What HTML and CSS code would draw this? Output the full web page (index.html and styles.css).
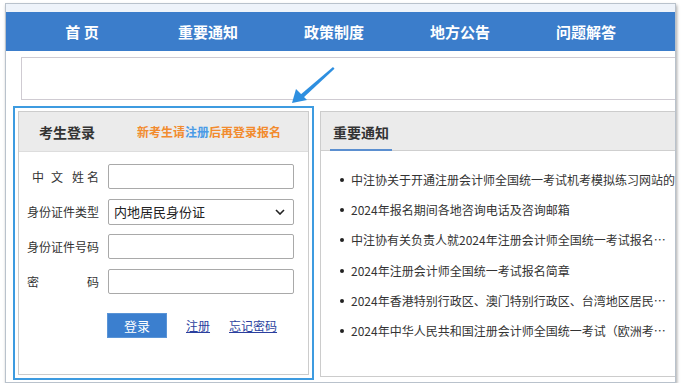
FILE: index.html
```html
<!DOCTYPE html>
<html lang="zh-CN">
<head>
<meta charset="utf-8">
<link rel="stylesheet" href="styles.css">
</head>
<body>
<div class="frame">
  <div class="strip"></div>
  <nav class="nav">
    <a class="nav-item">首 页</a>
    <a class="nav-item">重要通知</a>
    <a class="nav-item">政策制度</a>
    <a class="nav-item">地方公告</a>
    <a class="nav-item">问题解答</a>
  </nav>
  <div class="banner"></div>
  <div class="main">
    <div class="login">
      <div class="panel">
        <div class="panel-head">
          <span class="panel-title">考生登录</span>
          <span class="tip">新考生请<span class="tip-link">注册</span>后再登录报名</span>
        </div>
        <div class="form">
          <div class="row">
            <label class="lbl"><span class="g7">中</span><span class="g9">文</span><span class="g3">姓</span>名</label>
            <input class="field" type="text">
          </div>
          <div class="row">
            <label class="lbl">身份证件类型</label>
            <div class="field select">
              <span>内地居民身份证</span>
              <svg class="chev" width="10" height="6" viewBox="0 0 10 6"><path d="M1 1 L5 5 L9 1" fill="none" stroke="#222" stroke-width="1.6"/></svg>
            </div>
          </div>
          <div class="row">
            <label class="lbl">身份证件号码</label>
            <input class="field" type="text">
          </div>
          <div class="row">
            <label class="lbl lbl-just">密码</label>
            <input class="field" type="password">
          </div>
          <div class="actions">
            <button class="btn">登录</button>
            <a class="link">注册</a>
            <a class="link">忘记密码</a>
          </div>
        </div>
      </div>
    </div>
    <div class="notice">
      <div class="notice-head"><span class="notice-title">重要通知</span></div>
      <ul class="list">
        <li class="item item-full">中注协关于开通注册会计师全国统一考试机考模拟练习网站的公告</li>
        <li class="item">2024年报名期间各地咨询电话及咨询邮箱</li>
        <li class="item">中注协有关负责人就2024年注册会计师全国统一考试报名相关问题答记者问</li>
        <li class="item">2024年注册会计师全国统一考试报名简章</li>
        <li class="item">2024年香港特别行政区、澳门特别行政区、台湾地区居民及外国籍公民报名简章</li>
        <li class="item">2024年中华人民共和国注册会计师全国统一考试（欧洲考区）报名简章</li>
      </ul>
    </div>
  </div>
  <svg class="arrow" width="60" height="50" viewBox="0 0 60 50">
    <path d="M49 5 L50.5 6.8 L18.5 36.5 L15.5 33.5 Z" fill="#2e8fe0"/>
    <path d="M8 41 L12 27 L23 38 Z" fill="#2e8fe0"/>
  </svg>
</div>
</body>
</html>
```

FILE: styles.css
```css
* { box-sizing: border-box; }
html, body { margin: 0; padding: 0; background: #ffffff; }
body {
  font-family: "Noto Sans CJK SC", "Noto Sans", sans-serif;
  color: #333;
}
.frame {
  position: relative;
  margin: 3px 0 0 5px;
  width: 671px;
  height: 380px;
  border: 1px solid #b9c2cc;
  box-shadow: 1px 2px 3px rgba(0,0,0,0.35);
  overflow: hidden;
  background: #fff;
}
.strip { height: 8px; background: #eef3fa; }
.nav {
  height: 39px;
  background: #3b7dcb;
  display: flex;
  padding-left: 13px;
}
.nav-item {
  width: 126px;
  display: flex;
  align-items: center;
  justify-content: center;
  color: #fff;
  font-size: 15px;
  font-weight: bold;
}
.banner {
  margin: 6px 0 0 15px;
  height: 43px;
  border: 1px solid #cfcbd2;
  border-right: none;
}
.main {
  display: flex;
  align-items: flex-start;
  margin-top: 6px;
  padding-left: 7px;
  gap: 6px;
}
.login {
  width: 301px;
  border: 2px solid #3d9be0;
  padding: 3px;
  flex: none;
}
.panel {
  height: 264px;
  border: 1px solid #cccccc;
}
.panel-head {
  height: 40px;
  background: #ebebeb;
  border-bottom: 1px solid #dddddd;
  display: flex;
  align-items: center;
  padding-left: 20px;
}
.panel-title { font-size: 14px; font-weight: bold; color: #333; width: 98px; }
.tip { font-size: 12px; font-weight: bold; color: #f28b2e; }
.tip-link { color: #4a9be6; }
.form { padding: 12px 0 0 8px; }
.row {
  display: flex;
  align-items: center;
  height: 25px;
  margin-bottom: 10px;
}
.lbl {
  width: 72px;
  margin-right: 9px;
  font-size: 12px;
  text-align: right;
  color: #333;
  white-space: nowrap;
}
.g7 { margin-right: 7px; }
.g9 { margin-right: 9px; }
.g3 { margin-right: 3px; }
.lbl-just { text-align: justify; text-align-last: justify; }
.field {
  width: 186px;
  height: 25px;
  border: 1px solid #a9a9a9;
  border-radius: 2px;
  background: #fff;
  padding: 0 6px;
  font-family: inherit;
  font-size: 13px;
}
.select {
  display: flex;
  align-items: center;
  justify-content: space-between;
  padding: 0 8px 0 5px;
  height: 26px;
  color: #222;
}
.chev { display: block; }
.actions {
  display: flex;
  align-items: center;
  margin: 19px 0 0 80px;
}
.btn {
  width: 60px;
  height: 25px;
  border: 1px solid #5a94d6;
  background: #3b7fcf;
  color: #fff;
  font-family: inherit;
  font-size: 13px;
  padding: 0;
  margin-right: 19px;
}
.link {
  font-size: 12px;
  color: #2b3f9e;
  text-decoration: underline;
  margin-right: 19px;
}
.notice {
  margin-top: 5px;
  width: 361px;
  height: 266px;
  border: 1px solid #cccccc;
  flex: none;
}
.notice-head {
  height: 39px;
  background: #ebebeb;
  border-bottom: 1px solid #cfcfcf;
  display: flex;
  align-items: flex-end;
  padding-left: 9px;
}
.notice-title {
  font-size: 14px;
  font-weight: bold;
  color: #333;
  padding: 0 3px;
  height: 29px;
  border-bottom: 2px solid #5b8fd0;
  margin-bottom: -1px;
}
.list {
  list-style: none;
  margin: 0;
  padding: 14px 0 0 19px;
}
.item {
  position: relative;
  height: 30.2px;
  line-height: 30px;
  font-size: 12px;
  color: #333;
  padding-left: 11px;
  max-width: 334px;
  white-space: nowrap;
  overflow: hidden;
  text-overflow: ellipsis;
}
.item-full { max-width: none; overflow: visible; }
.item::before {
  content: "";
  position: absolute;
  left: 0;
  top: 13px;
  width: 4px;
  height: 4px;
  border-radius: 50%;
  background: #222;
}
.arrow {
  position: absolute;
  left: 278px;
  top: 58px;
}
```
